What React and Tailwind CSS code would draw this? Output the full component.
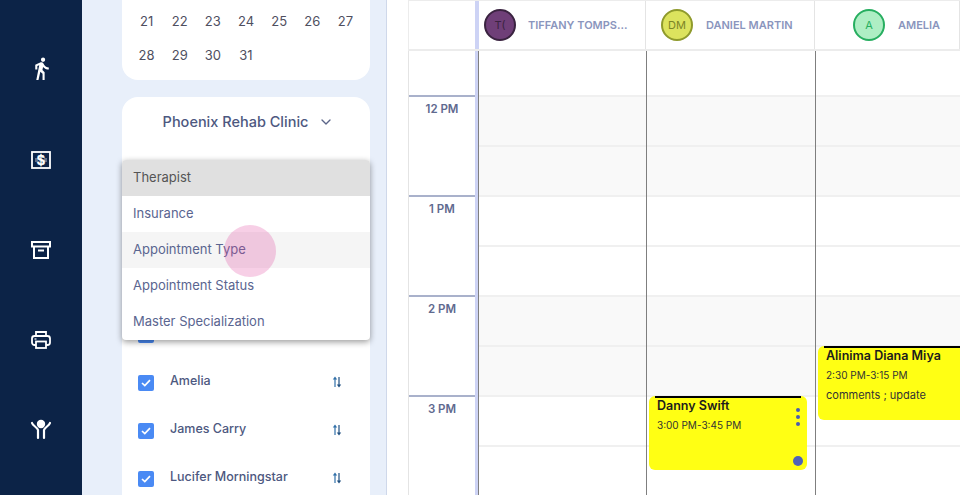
import React from 'react';
import { MdDirectionsWalk } from 'react-icons/md';
import { ChevronDown } from 'lucide-react';

const font = { fontFamily: '"Inter", "Noto Sans", sans-serif' };

const hours = [
  { label: '12 PM', bg: 'bg-[#f9f9f9]' },
  { label: '1 PM', bg: 'bg-white' },
  { label: '2 PM', bg: 'bg-[#f9f9f9]' },
  { label: '3 PM', bg: 'bg-white' },
];

const therapists = [
  { name: 'TIFFANY TOMPS...', initials: 'T(', w: 'w-[167px]', avatar: 'bg-[#6f3f78] border-[#3a2340] text-[#3a2340]', gap: 'gap-[12px] pl-[5px]' },
  { name: 'DANIEL MARTIN', initials: 'DM', w: 'w-[169px]', avatar: 'bg-[#dce35e] border-[#8f9a2c] text-[#7d8526]', gap: 'gap-[13px] pl-[15px]' },
  { name: 'AMELIA', initials: 'A', w: 'flex-1', avatar: 'bg-[#aeeec4] border-[#27ae60] text-[#27ae60]', gap: 'gap-[13px] pl-[38px]' },
];

const menu = ['Therapist', 'Insurance', 'Appointment Type', 'Appointment Status', 'Master Specialization'];

const dates = [21, 22, 23, 24, 25, 26, 27, 28, 29, 30, 31];

function MoneyIcon() {
  return (
    <svg width="20" height="18" viewBox="0 0 20 18" fill="none">
      <rect x="1" y="1" width="18" height="16" stroke="white" strokeWidth="1.8" />
      <path d="M4 9h3M13 9h3" stroke="white" strokeWidth="4" strokeOpacity="0.35" />
      <text x="10" y="14" textAnchor="middle" fontSize="14" fontWeight="700" fill="white" stroke="white" strokeWidth="0.4" fontFamily="Liberation Sans">$</text>
    </svg>
  );
}

function ArchiveIcon() {
  return (
    <svg width="20" height="18" viewBox="0 0 20 18" fill="none" stroke="white" strokeWidth="2">
      <rect x="1" y="1" width="18" height="4.5" />
      <path d="M3 5.5V17h14V5.5" />
      <path d="M7 9.5h6" />
    </svg>
  );
}

function PrinterIcon() {
  return (
    <svg width="20" height="18" viewBox="0 0 20 18" fill="none" stroke="white" strokeWidth="1.8">
      <path d="M5 5V1h10v4" />
      <rect x="1" y="5" width="18" height="9" rx="2.5" />
      <rect x="5" y="10.5" width="10" height="6.5" fill="#0c2347" />
      <path d="M3.5 8h2" strokeWidth="1.2" />
    </svg>
  );
}

function PersonUpIcon() {
  return (
    <svg width="22" height="22" viewBox="0 0 22 22" fill="none">
      <circle cx="11" cy="6" r="4.2" fill="white" />
      <path d="M2 5c1 3 5 4 6 7v8" stroke="white" strokeWidth="2.2" strokeLinecap="round" />
      <path d="M20 5c-1 3-5 4-6 7v8" stroke="white" strokeWidth="2.2" strokeLinecap="round" />
    </svg>
  );
}

function SortIcon() {
  return (
    <svg width="10" height="12" viewBox="0 0 10 12" className="-mt-[3px]">
      <path d="M3 11V3" stroke="#2f6fa8" strokeWidth="1.2" />
      <path d="M0.8 3.6L3 0.6l2.2 3z" fill="#2f6fa8" />
      <path d="M7 1v8" stroke="#1f4f80" strokeWidth="1.2" />
      <path d="M4.8 8.4L7 11.4l2.2-3z" fill="#1f4f80" />
    </svg>
  );
}

function CheckRow({ name }) {
  return (
    <div className="flex h-[48px] shrink-0 items-center pl-[16px] pr-[28px]">
      <span className="flex h-4 w-4 items-center justify-center rounded-[2px] bg-[#4a8af4]">
        <svg width="10" height="8" viewBox="0 0 10 8" fill="none">
          <path d="M1 4l2.8 2.6L9 1.2" stroke="white" strokeWidth="1.7" />
        </svg>
      </span>
      <span className="ml-[16px] -mt-[4px] flex-1 text-[12.5px] font-medium text-[#4d5880]">{name}</span>
      <SortIcon />
    </div>
  );
}

function Sidebar() {
  return (
    <div className="flex w-[82px] shrink-0 flex-col items-center bg-[#0c2347] pt-[56px] text-white">
      <div className="flex h-[90px] shrink-0 justify-center"><MdDirectionsWalk size={25} /></div>
      <div className="flex h-[90px] shrink-0 justify-center pt-[5px]"><MoneyIcon /></div>
      <div className="flex h-[90px] shrink-0 justify-center pt-[5px]"><ArchiveIcon /></div>
      <div className="flex h-[90px] shrink-0 justify-center pt-[5px]"><PrinterIcon /></div>
      <div className="flex h-[90px] shrink-0 justify-center pt-[2px]"><PersonUpIcon /></div>
    </div>
  );
}

function FilterPanel() {
  return (
    <div className="relative flex w-[305px] shrink-0 flex-col border-r border-[#cfd8ea] bg-[#e8effa] pl-[40px] pr-[16px]">
      <div className="grid h-[80px] shrink-0 grid-cols-7 content-start rounded-b-[16px] bg-white px-[8px] pt-[5px]">
        {dates.map(d => (
          <span key={d} className="flex h-[34px] items-center justify-center text-[13px] text-[#4f4f5f]">{d}</span>
        ))}
      </div>
      <div className="mt-[17px] flex flex-1 flex-col rounded-t-[16px] bg-white">
        <div className="flex h-[49px] shrink-0 items-center justify-center gap-[10px] pl-[5px] text-[14.5px] font-medium text-[#4d5880]">
          Phoenix Rehab Clinic
          <ChevronDown size={16} className="text-[#5b6588]" />
        </div>
        <div className="h-[165px] shrink-0" />
        <CheckRow name="" />
        <CheckRow name="Amelia" />
        <CheckRow name="James Carry" />
        <CheckRow name="Lucifer Morningstar" />
      </div>

      {/* dropdown sits over the card */}
      <div className="absolute left-[40px] top-[160px] w-[248px] rounded-[4px] bg-white shadow-[0_2px_6px_rgba(0,0,0,0.4)]">
        {menu.map((m, i) => (
          <div
            key={m}
            className={`flex h-[36px] items-center pl-[11px] text-[13px] ${i === 0 ? 'rounded-t-[4px] bg-[#e0e0e0] text-[#555]' : i === 2 ? 'bg-[#f5f5f5] text-[#5a6590]' : 'text-[#5a6590]'}`}
          >
            {m}
          </div>
        ))}
      </div>
      <div className="absolute left-[142px] top-[225px] h-[52px] w-[52px] rounded-full bg-[#e0409a]/25" />
    </div>
  );
}

function Schedule() {
  return (
    <div className="flex flex-1 flex-col bg-white pl-[21px]">
      <div className="flex h-[51px] shrink-0 border-t border-b-2 border-l border-[#ececec]">
        <div className="w-[66px] shrink-0" />
        <div className="w-[4px] shrink-0 bg-[#cdd3f5]" />
        {therapists.map(t => (
          <div key={t.name} className={`flex ${t.w} ${t.gap} items-center border-r border-[#e4e4e4]`}>
            <span className={`flex h-[32px] w-[32px] shrink-0 items-center justify-center rounded-full border-2 text-[11px] ${t.avatar}`}>{t.initials}</span>
            <span className="whitespace-nowrap text-[11px] font-semibold text-[#8a95bd]">{t.name}</span>
          </div>
        ))}
      </div>

      <div className="relative flex flex-1">
        {/* time column */}
        <div className="flex w-[67px] shrink-0 flex-col border-l border-[#e4e4e4]">
          <div className="h-[46px] shrink-0 border-b-2 border-[#a9b1cb]" />
          {hours.map(h => (
            <div key={h.label} className="h-[100px] shrink-0 border-b-2 border-[#a9b1cb] pt-[4px] text-center text-[11.5px] font-semibold text-[#5f6a8f]">
              {h.label}
            </div>
          ))}
        </div>
        <div className="w-[3px] shrink-0 bg-[#cdd3f5]" />

        {/* day columns */}
        <div className="flex flex-1 flex-col border-l border-[#7f7f7f]">
          <div className="h-[46px] shrink-0 border-b-2 border-[#f0f0f0]" />
          {hours.map(h => (
            <React.Fragment key={h.label}>
              <div className={`h-[50px] shrink-0 border-b-2 border-[#f0f0f0] ${h.bg}`} />
              <div className={`h-[50px] shrink-0 border-b-2 border-[#f0f0f0] ${h.bg}`} />
            </React.Fragment>
          ))}
        </div>

        {/* column rules lie over the rows */}
        <div className="absolute bottom-0 left-[238px] top-0 w-px bg-[#7f7f7f]" />
        <div className="absolute bottom-0 left-[407px] top-0 w-px bg-[#7f7f7f]" />

        <div className="absolute left-[241px] top-[345px] h-[74px] w-[158px] rounded-[6px] bg-[#ffff14] pl-[8px] pt-[2px]">
          <div className="absolute left-[6px] right-[6px] top-0 h-[2px] bg-black" />
          <div className="text-[12.5px] font-semibold leading-[16px] text-[#1c1c1c]">Danny Swift</div>
          <div className="mt-[3px] text-[10px] leading-[16px] text-[#333]">3:00 PM-3:45 PM</div>
          <div className="absolute right-[7px] top-[12px] flex flex-col gap-[3px]">
            <span className="h-[4px] w-[4px] rounded-full bg-[#4a5cb0]" />
            <span className="h-[4px] w-[4px] rounded-full bg-[#4a5cb0]" />
            <span className="h-[4px] w-[4px] rounded-full bg-[#4a5cb0]" />
          </div>
          <span className="absolute bottom-[4px] right-[4px] h-[10px] w-[10px] rounded-full bg-[#4f63b8]" />
        </div>

        <div className="absolute left-[410px] right-0 top-[295px] h-[74px] rounded-l-[6px] bg-[#ffff14] pl-[8px] pt-[2px]">
          <div className="absolute left-[6px] right-0 top-0 h-[2px] bg-black" />
          <div className="whitespace-nowrap text-[12.5px] font-semibold leading-[16px] text-[#1c1c1c]">Alinima Diana Miya</div>
          <div className="mt-[3px] text-[10px] leading-[16px] text-[#333]">2:30 PM-3:15 PM</div>
          <div className="mt-[4px] text-[11px] leading-[16px] text-[#333]">comments ; update</div>
        </div>
      </div>
    </div>
  );
}

export default function App() {
  return (
    <div className="flex h-[495px] w-[960px] overflow-hidden" style={font}>
      <Sidebar />
      <FilterPanel />
      <Schedule />
    </div>
  );
}
